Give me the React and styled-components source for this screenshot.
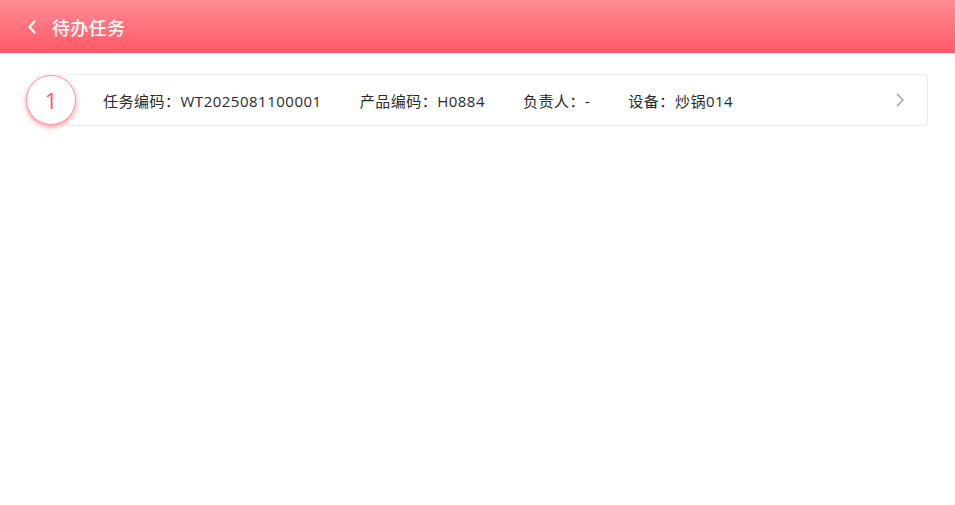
import React from "react";
import styled, { createGlobalStyle } from "styled-components";

const GlobalStyle = createGlobalStyle`
  html, body {
    margin: 0;
    padding: 0;
    background: #ffffff;
  }
  body {
    font-family: "Open Sans", "Noto Sans CJK SC", sans-serif;
  }
`;

const Page = styled.div`
  width: 100vw;
  min-height: 100vh;
  background: #ffffff;
`;

const Header = styled.div`
  height: 53px;
  display: flex;
  align-items: center;
  padding-left: 27px;
  background: linear-gradient(180deg, #ff8c96 0%, #ff5966 100%);
  color: #ffffff;
`;

const BackBtn = styled.div`
  width: 14px;
  height: 20px;
  display: flex;
  align-items: center;
  margin-right: 11px;
  cursor: pointer;
`;

const Title = styled.div`
  font-size: 18px;
  font-weight: 500;
  letter-spacing: 0.3px;
  font-family: "Noto Sans CJK SC", sans-serif;
`;

const List = styled.div`
  padding: 21px 27px 0 26px;
  display: flex;
  flex-direction: column;
  gap: 12px;
`;

const Row = styled.div`
  display: flex;
  align-items: center;
`;

const IndexBadge = styled.div`
  width: 48px;
  height: 48px;
  flex-shrink: 0;
  border-radius: 50%;
  background: #ffffff;
  border: 1px solid #ff98a2;
  box-shadow: 0 2px 5px rgba(255, 70, 90, 0.6);
  display: flex;
  align-items: center;
  justify-content: center;
  color: #ff5669;
  font-size: 22px;
  font-family: "Open Sans", sans-serif;
  position: relative;
  z-index: 1;
`;

const Card = styled.div`
  flex: 1;
  height: 50px;
  margin-left: -11px;
  border: 1px solid #ececec;
  border-radius: 4px;
  display: flex;
  align-items: center;
  padding: 0 20px 0 37px;
  background: #ffffff;
`;

const Fields = styled.div`
  flex: 1;
  display: flex;
  align-items: center;
  gap: 38px;
  font-size: 15px;
  letter-spacing: 0.5px;
  color: #2a2a2a;
`;

const Field = styled.span`
  white-space: nowrap;
`;

const Arrow = styled.div`
  width: 12px;
  height: 14px;
  display: flex;
  align-items: center;
`;

const tasks = [
  {
    id: 1,
    code: "WT2025081100001",
    product: "H0884",
    owner: "-",
    device: "炒锅014",
  },
];

const App = () => {
  return (
    <Page>
      <GlobalStyle />
      <Header>
        <BackBtn>
          <svg width="10" height="14" viewBox="0 0 10 14">
            <path
              d="M7.5 1.5 L2.5 7 L7.5 12.5"
              fill="none"
              stroke="#ffffff"
              strokeWidth="2.2"
              strokeLinecap="round"
              strokeLinejoin="round"
            />
          </svg>
        </BackBtn>
        <Title>待办任务</Title>
      </Header>

      <List>
        {tasks.map((task, index) => (
          <Row key={task.id}>
            <IndexBadge>{index + 1}</IndexBadge>
            <Card>
              <Fields>
                <Field>任务编码：{task.code}</Field>
                <Field>产品编码：{task.product}</Field>
                <Field>负责人：{task.owner}</Field>
                <Field>设备：{task.device}</Field>
              </Fields>
              <Arrow>
                <svg width="10" height="14" viewBox="0 0 10 14">
                  <path
                    d="M2.5 1.5 L8 7 L2.5 12.5"
                    fill="none"
                    stroke="#9a9a9a"
                    strokeWidth="1.4"
                    strokeLinecap="round"
                    strokeLinejoin="round"
                  />
                </svg>
              </Arrow>
            </Card>
          </Row>
        ))}
      </List>
    </Page>
  );
};

export default App;
